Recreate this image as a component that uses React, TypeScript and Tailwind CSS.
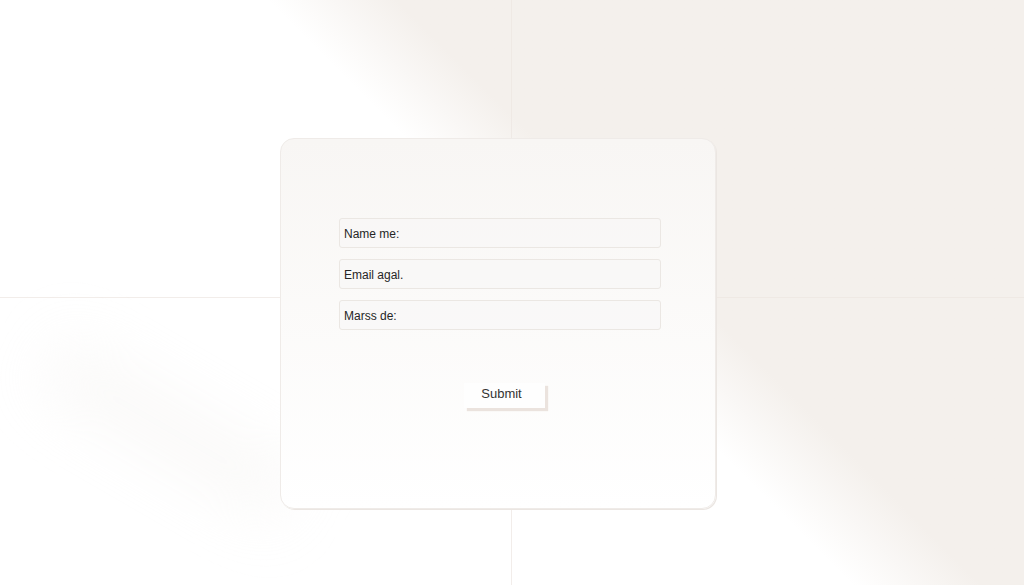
const fields = ["Name me:", "Email agal.", "Marss de:"];

export default function App() {
    return (
        <div className="relative h-[585px] w-full overflow-hidden bg-linear-45 from-white from-53% to-[#f4f0ec] to-61% font-['Liberation_Sans',Arial,sans-serif]">

            {/* faint panel seams behind the card */}
            <div className="absolute inset-0 grid grid-cols-[512px_1fr] grid-rows-[298px_1fr]">
                <div className="border-r border-b border-[#ece6e1]/70" />
                <div className="border-b border-[#ece6e1]/70" />
                <div className="border-r border-[#ece6e1]/70" />
                <div />
            </div>

            {/* soft leaf shadow, lower left */}
            <div className="absolute left-[30px] top-[400px] h-[60px] w-[280px] rotate-[30deg] rounded-full bg-[#efebe7]/30 blur-[30px]" />

            <div className="relative pl-[280px] pt-[138px]">
                <form className="flex h-[371px] w-[436px] flex-col rounded-[14px] border border-[#efebe8] bg-linear-to-b from-[#f8f6f4] to-white pl-[58px] pr-[55px] pt-[79px] shadow-[1px_1px_0_#ebe6e2]">
                    <div className="flex flex-col gap-[11px]">
                        {fields.map((f) => (
                            <input
                                key={f}
                                placeholder={f}
                                className="h-[30px] w-[322px] rounded-[3px] border border-[#ebe7e3] bg-[#f8f7f6]/60 px-[4px] pt-[2px] text-[12px] text-[#262626] outline-none placeholder:text-[#262626]"
                            />
                        ))}
                    </div>

                    <button
                        type="button"
                        className="ml-[125px] mt-[53px] h-[25px] w-[81px] bg-[#fefefe] pb-[3px] pr-[6px] text-[13px] text-[#333] shadow-[3px_3px_1px_#ebe3de]"
                    >
                        Submit
                    </button>
                </form>
            </div>
        </div>
    );
}
